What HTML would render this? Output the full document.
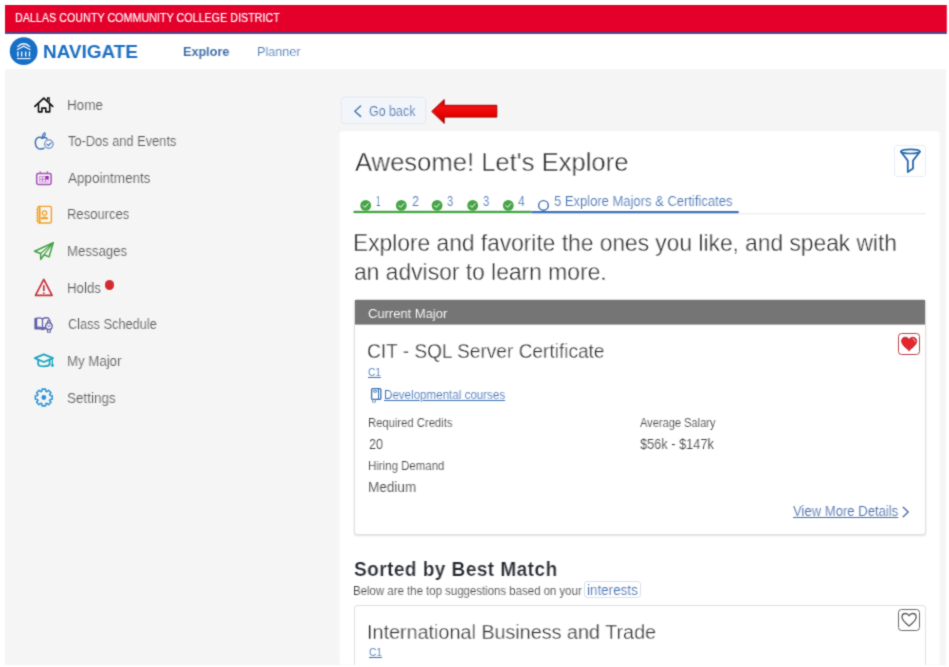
<!DOCTYPE html>
<html lang="en">
<head>
<meta charset="utf-8">
<title>Navigate - Explore Majors</title>
<style>
*{box-sizing:border-box;margin:0;padding:0}
html,body{width:949px;height:667px;overflow:hidden;background:#fff}
body{font-family:"Liberation Sans",sans-serif;position:relative;color:#555;filter:url(#softblur)}
.abs{position:absolute}
.t{position:absolute;white-space:nowrap;line-height:1;transform-origin:0 50%;will-change:transform}
svg{position:absolute;left:0;top:0;overflow:visible}
</style>
</head>
<body>
<svg width="0" height="0" style="position:absolute"><defs><filter id="softblur" x="0" y="0" width="100%" height="100%" color-interpolation-filters="sRGB"><feConvolveMatrix order="3" kernelMatrix="0.035 0.09 0.035 0.09 0.5 0.09 0.035 0.09 0.035" divisor="1" edgeMode="duplicate" preserveAlpha="true"/></filter></defs></svg>
<div id="bgwhite" class="abs" style="left:0;top:0;width:949px;height:667px;background:#fff"></div>
<div class="abs" style="left:5px;top:5px;width:941px;height:659.5px;background:#f5f5f5"></div>

<!-- main white panel -->
<svg width="949" height="667" viewBox="0 0 949 667"><path d="M339.5 664.5 V134.2 a3 3 0 0 1 3 -3 H936.6 a3 3 0 0 1 3 3 V664.5 Z" fill="#fff"/></svg>

<!-- go back button -->

<!-- steps lines -->

<!-- card 1 -->
<div class="abs" style="left:354px;top:299px;width:572px;height:236px;background:#fff;border:1px solid #e0e0e0;border-radius:3px;box-shadow:0 1px 2px rgba(0,0,0,.13)"></div>
<div class="abs" style="left:898px;top:333px;width:22px;height:22px;border:1px solid #b8434c;border-radius:3.5px;background:#fff"></div>

<!-- filter button -->
<div class="abs" style="left:894px;top:145px;width:31.5px;height:31.5px;border:1px solid #e6edf7;border-radius:3px;background:#fff"></div>

<!-- interests chip -->
<div class="abs" style="left:583.7px;top:581px;width:57px;height:17.2px;border:1px solid #d9e2ef;border-radius:3px;background:#fff"></div>

<!-- card 2 -->
<div class="abs" style="left:354px;top:605px;width:572px;height:80px;background:#fff;border:1px solid #e0e0e0;border-radius:3px"></div>
<div class="abs" style="left:898px;top:608.5px;width:22px;height:22px;border:1px solid #6a6a6a;border-radius:3.5px;background:#fff"></div>
<!-- cover overflow at bottom -->
<div class="abs" style="left:0;top:664.5px;width:949px;height:3px;background:#fff"></div>
<div class="abs" style="left:946.5px;top:0;width:3px;height:667px;background:#fff"></div>

<!-- holds dot -->
<div class="abs" style="left:105px;top:280.3px;width:9.4px;height:9.4px;border-radius:50%;background:#d42a30"></div>

<svg width="949" height="667" viewBox="0 0 949 667" fill="none" stroke-linecap="round" stroke-linejoin="round">
  <defs>
    <linearGradient id="ag" x1="0" y1="0" x2="0" y2="1">
      <stop offset="0" stop-color="#c40000"/><stop offset=".35" stop-color="#f01010"/><stop offset=".65" stop-color="#e80000"/><stop offset="1" stop-color="#b00000"/>
    </linearGradient>
  </defs>
  <!-- header bars -->
  <rect x="5" y="33" width="942" height="36.1" fill="#fff" stroke="none"/>
  <rect x="5" y="5" width="941.8" height="27.3" fill="#e4002b" stroke="none"/>
  <rect x="5" y="5" width="941.8" height="0.6" fill="#c40026" stroke="none"/>
  <rect x="5" y="32.2" width="941.8" height="1.6" fill="#26277f" stroke="none"/>
  <rect x="355" y="300" width="570" height="24.6" fill="#757575" stroke="none"/>
  <!-- step lines -->
  <rect x="354" y="213.2" width="572" height="1" fill="#e9e9e9" stroke="none"/>
  <rect x="353.5" y="210.8" width="178" height="2.2" fill="#47a447" stroke="none"/>
  <rect x="531.5" y="211" width="207.2" height="2.2" fill="#3f73b7" stroke="none"/>
  <!-- logo -->
  <circle cx="23.7" cy="51.2" r="13.9" fill="#176fc6"/>
  <g stroke="#fff" stroke-width="1.2" stroke-linecap="butt">
    <path d="M17.3 46.9 Q23.7 40.6 30.1 46.9"/>
    <path d="M16.9 49.8 L23.7 46.2 L30.5 49.8" stroke-linejoin="miter"/>
    <path d="M17.9 51.6V56.6M21.7 51.6V56.6M25.7 51.6V56.6M29.5 51.6V56.6" stroke-width="1.3"/>
    <path d="M16.9 58.6H30.6" stroke-width="1.1"/>
  </g>

  <!-- home -->
  <g stroke="#111" stroke-linejoin="round" stroke-linecap="round">
    <path d="M34.9 106.3 L43.8 98.2 L52.7 106.3" stroke-width="1.8" stroke-linejoin="miter"/>
    <path d="M38.5 104 V111.9 H41.9 V108.1 H45.8 V111.9 H49.7 V104" stroke-width="1.6"/>
    <path d="M47.5 100.4 V97.9 H49.2 V102" stroke-width="1.2" stroke-linecap="butt" stroke-linejoin="miter"/>
  </g>

  <!-- apple / to-dos -->
  <g stroke="#3d72b4" stroke-width="1.5">
    <path d="M42.3 138.3 C40.5 136.8 37.6 137 36.2 139.2 C34.6 141.8 35.2 146 37.6 148 C39.6 149.6 42.3 149 44 148.3"/>
    <path d="M42.3 138.3 C43.6 137.4 45.6 137.3 46.9 138.6"/>
    <path d="M42.4 138 C42.2 135.8 43 133.6 44.8 132.8 C45.6 134.4 44.6 136.6 42.4 138 Z" stroke-width="1.2"/>
  </g>
  <circle cx="48.9" cy="144.1" r="4.2" fill="#f8fafd" stroke="#6f90c0" stroke-width="1.3"/>
  <path d="M47 144.2 L48.4 145.6 L51 142.8" stroke="#3d72b4" stroke-width="1.2"/>

  <!-- calendar -->
  <g stroke="#a451b7" stroke-width="1.5" stroke-linecap="butt">
    <rect x="36.7" y="173.4" width="14.4" height="11" rx="1.6"/>
    <path d="M40.2 171.2V173.4M47.3 171.2V173.4" stroke-width="1.1"/>
  </g>
  <rect x="39.2" y="176" width="9.4" height="6.4" fill="#c68ad3"/>
  <rect x="45.6" y="176" width="3" height="3.2" fill="#8e2aa3"/>
  <g fill="#fbeffd"><rect x="40" y="176.9" width="1.9" height="1.7"/><rect x="43" y="176.9" width="1.9" height="1.7"/><rect x="40" y="179.9" width="1.9" height="1.7"/><rect x="43" y="179.9" width="1.9" height="1.7"/><rect x="46" y="179.9" width="1.9" height="1.7"/></g>

  <!-- resources -->
  <g stroke="#f0a226" stroke-width="1.4">
    <rect x="37.8" y="206.4" width="13.6" height="16.6" rx="1.4"/>
    <path d="M39.8 206.6V222.8" stroke-width="1.6"/>
    <path d="M36.2 209.6H38M36.2 212.4H38M36.2 215.2H38M36.2 218H38M36.2 220.6H38" stroke-width="1" stroke-linecap="butt"/>
    <circle cx="44.5" cy="213" r="2.2" stroke-width="1.2"/>
    <path d="M41.5 218.6 C41.7 216.6 47.3 216.6 47.5 218.6 Z" stroke-width="1.2"/>
  </g>

  <!-- messages -->
  <g stroke="#43a143" stroke-width="1.5">
    <path d="M53.2 242.7 L34.6 251.2 L40.6 253.5 L40.8 259.4 L44 254.8 L49.1 256.9 Z"/>
    <path d="M53.2 242.7 L40.6 253.5 M53.2 242.7 L44 254.8" stroke-width="1.1"/>
  </g>

  <!-- holds -->
  <g stroke="#c9323b">
    <path d="M43.8 279.4 L52.1 295.3 H35.5 Z" stroke-width="1.7"/>
    <path d="M43.8 285.2 V291" stroke-width="1.7" stroke-linecap="butt"/>
    <path d="M43.8 292.4 V293.8" stroke-width="1.7" stroke-linecap="butt"/>
  </g>

  <!-- class schedule -->
  <g stroke="#625fa8" stroke-width="1.3">
    <path d="M36.6 318.4 C38.6 317.6 40.8 317.8 42.5 319 C44.2 317.8 46.6 317.5 48.6 318.2 L49.6 320.4"/>
    <path d="M36.6 318.4 V327.6 C38.6 326.9 40.8 327.2 42.5 328.4 C43.6 327.6 44.6 327.3 45.6 327.2"/>
    <path d="M42.5 319 V328.2"/>
    <path d="M35.2 318.6 V328.8 H41 C41.6 329.8 43.4 329.8 44 328.8 H45.4" stroke-width="1.6"/>
    <circle cx="48.9" cy="326.2" r="3.3" fill="#f5f5f5"/>
    <path d="M47.3 323.3 L47.6 320.9 H50.2 L50.5 323.3 M47.3 329.1 L47.6 332.2 H50.2 L50.5 329.1" stroke-width="1.1"/>
    <path d="M47.7 325.6 L48.9 326.8 L50.4 325.2" stroke-width="1"/>
  </g>

  <!-- my major -->
  <g stroke="#1ba6c2" stroke-width="1.8">
    <path d="M43.8 354.3 L53 358.2 L43.8 362 L34.8 358.2 Z"/>
    <path d="M38.2 360.4 V364.6 C39.6 367 48 367 49.6 364.6 V360.4"/>
    <path d="M52.3 358.8 V364" stroke-width="1.2"/>
  </g>
  <ellipse cx="52.4" cy="365.2" rx="1.3" ry="1.7" fill="#1ba6c2"/>

  <!-- settings -->
  <path d="M41.8 391.2 L42.1 389.1 L45.5 389.1 L45.8 391.2 L46.9 391.7 L48.6 390.3 L51.0 392.7 L49.6 394.4 L50.1 395.5 L52.2 395.8 L52.2 399.2 L50.1 399.5 L49.6 400.6 L51.0 402.3 L48.6 404.7 L46.9 403.3 L45.8 403.8 L45.5 405.9 L42.1 405.9 L41.8 403.8 L40.7 403.3 L39.0 404.7 L36.6 402.3 L38.0 400.6 L37.5 399.5 L35.4 399.2 L35.4 395.8 L37.5 395.5 L38.0 394.4 L36.6 392.7 L39.0 390.3 L40.7 391.7 Z" stroke="#2f97d8" stroke-width="1.6"/>
  <circle cx="43.8" cy="397.5" r="2.4" fill="#2b8fe3"/>

  <rect x="341.2" y="97.1" width="84.6" height="26.6" rx="3.5" fill="#f2f5f9" stroke="#e3e8f0" stroke-width="1"/>
  <!-- go back chevron -->
  <path d="M360.6 106 L354.8 111.2 L360.6 116.4" stroke="#4a7ab6" stroke-width="1.5"/>

  <!-- red arrow -->
  <path d="M432 111.2 L444.2 99.6 V105.3 H496.8 V117.1 H444.2 V123 Z" fill="url(#ag)" stroke="#a80000" stroke-width="1" stroke-linejoin="miter"/>

  <!-- filter -->
  <g stroke="#2868ae" stroke-width="1.8">
    <ellipse cx="910.4" cy="151.4" rx="9.5" ry="2.1" stroke-width="1.7"/>
    <path d="M900.9 151.8 L907.8 160.6 V172 L913 168.6 V160.6 L919.9 151.8"/>
  </g>

  <!-- step circles -->
  <g fill="#46a546">
    <circle cx="365.7" cy="205.4" r="5.4"/><circle cx="401.3" cy="205.4" r="5.4"/><circle cx="437.1" cy="205.4" r="5.4"/><circle cx="472.7" cy="205.4" r="5.4"/><circle cx="508.3" cy="205.4" r="5.4"/>
  </g>
  <g stroke="#fff" stroke-width="1">
    <path d="M363.3 205.6 L365 207.3 L368.1 203.8"/>
    <path d="M398.9 205.6 L400.6 207.3 L403.7 203.8"/>
    <path d="M434.7 205.6 L436.4 207.3 L439.5 203.8"/>
    <path d="M470.3 205.6 L472 207.3 L475.1 203.8"/>
    <path d="M505.9 205.6 L507.6 207.3 L510.7 203.8"/>
  </g>
  <circle cx="543.5" cy="205.4" r="4.8" stroke="#3f6fb5" stroke-width="1.4" fill="#fff"/>

  <!-- filled heart -->
  <path d="M909.1 350.4 C905.5 347.6 901.6 344.6 901.6 341 C901.6 338.8 903.2 337.2 905.3 337.2 C906.9 337.2 908.3 338.1 909.1 339.5 C909.9 338.1 911.3 337.2 912.9 337.2 C915 337.2 916.7 338.8 916.7 341 C916.7 344.6 912.7 347.6 909.1 350.4 Z" fill="#e3272e" stroke="#b81c22" stroke-width=".8"/>
  <path d="M913 338.9 C914.2 339.1 915 340 915.1 341.2" stroke="#fff" stroke-width=".9" opacity=".85"/>

  <!-- outline heart -->
  <path d="M909.1 626 C905.6 623.3 902 620.5 902 617.1 C902 615 903.6 613.5 905.5 613.5 C907 613.5 908.3 614.3 909.1 615.7 C909.9 614.3 911.2 613.5 912.7 613.5 C914.6 613.5 916.2 615 916.2 617.1 C916.2 620.5 912.6 623.3 909.1 626 Z" stroke="#5a5a5a" stroke-width="1.3" fill="#fff"/>

  <!-- developmental icon -->
  <g stroke="#3b6fb0" stroke-width="1.3" stroke-linecap="butt">
    <rect x="371.6" y="388.6" width="9.2" height="10.8" rx="1"/>
    <path d="M378.5 388.8V399.2" stroke-width="1"/>
    <rect x="373.4" y="390.4" width="3.6" height="1.8" rx=".8" stroke-width=".9"/>
    <path d="M372.6 399.6 V402.2 H375.4 V399.6" stroke-width="1" stroke="#6f95c8"/>
  </g>

  <!-- view more chevron -->
  <path d="M903.2 507.2 L908.2 512 L903.2 516.8" stroke="#4f6fa6" stroke-width="1.4"/>
</svg>

<div id="t_dallas" class="t" style="left:15.1px;top:12.0px;font-size:12px;color:#fff;transform:scaleX(0.8956);-webkit-text-stroke:0.15px #fff;">DALLAS COUNTY COMMUNITY COLLEGE DISTRICT</div>
<div id="t_navigate" class="t" style="left:42.5px;top:42.0px;font-size:19px;color:#1b6ec2;transform:scaleX(0.9947);font-weight:bold;">NAVIGATE</div>
<div id="t_explore" class="t" style="left:183.2px;top:45.0px;font-size:13px;color:#3f6ea6;transform:scaleX(0.9702);font-weight:bold;">Explore</div>
<div id="t_planner" class="t" style="left:256.9px;top:45.0px;font-size:13px;color:#4b76b4;transform:scaleX(0.9705);-webkit-text-stroke:0.13px #fff;">Planner</div>
<div id="s1" class="t" style="left:66.8px;top:98.0px;font-size:14px;color:#5a5a5a;transform:scaleX(0.9611);-webkit-text-stroke:0.14px #f5f5f5;">Home</div>
<div id="s2" class="t" style="left:67.8px;top:134.0px;font-size:14px;color:#5a5a5a;transform:scaleX(0.9161);-webkit-text-stroke:0.14px #f5f5f5;">To-Dos and Events</div>
<div id="s3" class="t" style="left:67.8px;top:171.0px;font-size:14px;color:#5a5a5a;transform:scaleX(0.9635);-webkit-text-stroke:0.14px #f5f5f5;">Appointments</div>
<div id="s4" class="t" style="left:66.9px;top:207.0px;font-size:14px;color:#5a5a5a;transform:scaleX(0.9288);-webkit-text-stroke:0.14px #f5f5f5;">Resources</div>
<div id="s5" class="t" style="left:66.9px;top:244.0px;font-size:14px;color:#5a5a5a;transform:scaleX(0.9413);-webkit-text-stroke:0.14px #f5f5f5;">Messages</div>
<div id="s6" class="t" style="left:66.9px;top:281.0px;font-size:14px;color:#5a5a5a;transform:scaleX(0.9486);-webkit-text-stroke:0.14px #f5f5f5;">Holds</div>
<div id="s7" class="t" style="left:67.8px;top:317.0px;font-size:14px;color:#5a5a5a;transform:scaleX(0.9124);-webkit-text-stroke:0.14px #f5f5f5;">Class Schedule</div>
<div id="s8" class="t" style="left:66.9px;top:354.0px;font-size:14px;color:#5a5a5a;transform:scaleX(0.9456);-webkit-text-stroke:0.14px #f5f5f5;">My Major</div>
<div id="s9" class="t" style="left:66.8px;top:391.0px;font-size:14px;color:#5a5a5a;transform:scaleX(0.9633);-webkit-text-stroke:0.14px #f5f5f5;">Settings</div>
<div id="t_goback" class="t" style="left:368.8px;top:104.0px;font-size:14px;color:#5078b4;transform:scaleX(0.8885);-webkit-text-stroke:0.14px #f2f5f9;">Go back</div>
<div id="t_title" class="t" style="left:354.5px;top:149.0px;font-size:26px;color:#2c2c2c;transform:scaleX(0.9848);-webkit-text-stroke:0.44px #fff;">Awesome! Let&#x27;s Explore</div>
<div id="n1" class="t" style="left:376.1px;top:194.0px;font-size:14px;color:#4b76b4;transform:scaleX(0.5429);-webkit-text-stroke:0.14px #fff;">1</div>
<div id="n2" class="t" style="left:412.0px;top:194.0px;font-size:14px;color:#4b76b4;transform:scaleX(0.9000);-webkit-text-stroke:0.14px #fff;">2</div>
<div id="n3" class="t" style="left:447.2px;top:194.0px;font-size:14px;color:#4b76b4;transform:scaleX(0.7875);-webkit-text-stroke:0.14px #fff;">3</div>
<div id="n4" class="t" style="left:483.0px;top:194.0px;font-size:14px;color:#4b76b4;transform:scaleX(0.8000);-webkit-text-stroke:0.14px #fff;">3</div>
<div id="n5" class="t" style="left:518.2px;top:194.0px;font-size:14px;color:#4b76b4;transform:scaleX(0.8750);-webkit-text-stroke:0.14px #fff;">4</div>
<div id="t_step" class="t" style="left:553.8px;top:194.0px;font-size:14px;color:#4b76b4;transform:scaleX(0.9283);-webkit-text-stroke:0.14px #fff;">5 Explore Majors &amp; Certificates</div>
<div id="t_sub1" class="t" style="left:353.2px;top:231.0px;font-size:24px;color:#2c2c2c;transform:scaleX(0.9482);-webkit-text-stroke:0.41px #fff;">Explore and favorite the ones you like, and speak with</div>
<div id="t_sub2" class="t" style="left:353.6px;top:260.0px;font-size:24px;color:#2c2c2c;transform:scaleX(0.9517);-webkit-text-stroke:0.41px #fff;">an advisor to learn more.</div>
<div id="t_cm" class="t" style="left:368.0px;top:307.0px;font-size:13.5px;color:#fff;transform:scaleX(0.9602);-webkit-text-stroke:0.08px #757575;">Current Major</div>
<div id="t_cit" class="t" style="left:367.2px;top:341.0px;font-size:20px;color:#2c2c2c;transform:scaleX(0.9538);-webkit-text-stroke:0.34px #fff;">CIT - SQL Server Certificate</div>
<div id="t_c1" class="t" style="left:368.2px;top:367.0px;font-size:11px;color:#3d70b4;transform:scaleX(0.9143);text-decoration:underline;text-decoration-color:#3d70b4;text-decoration-thickness:1px;text-underline-offset:1px;-webkit-text-stroke:0.11px #fff;">C1</div>
<div id="t_dev" class="t" style="left:383.6px;top:389.0px;font-size:12px;color:#3d70b4;transform:scaleX(0.9653);text-decoration:underline;text-decoration-color:#3d70b4;text-decoration-thickness:1px;text-underline-offset:1px;-webkit-text-stroke:0.12px #fff;">Developmental courses</div>
<div id="t_rc" class="t" style="left:367.6px;top:417.0px;font-size:12px;color:#424242;transform:scaleX(0.9382);-webkit-text-stroke:0.12px #fff;">Required Credits</div>
<div id="t_20" class="t" style="left:368.5px;top:437.0px;font-size:14px;color:#424242;transform:scaleX(0.9000);-webkit-text-stroke:0.14px #fff;">20</div>
<div id="t_hd" class="t" style="left:367.5px;top:460.0px;font-size:12px;color:#424242;transform:scaleX(0.9544);-webkit-text-stroke:0.12px #fff;">Hiring Demand</div>
<div id="t_med" class="t" style="left:367.5px;top:480.0px;font-size:14px;color:#424242;transform:scaleX(0.9667);-webkit-text-stroke:0.14px #fff;">Medium</div>
<div id="t_as" class="t" style="left:640.1px;top:417.0px;font-size:12px;color:#424242;transform:scaleX(0.9220);-webkit-text-stroke:0.12px #fff;">Average Salary</div>
<div id="t_sal" class="t" style="left:640.1px;top:437.0px;font-size:14px;color:#424242;transform:scaleX(0.9123);-webkit-text-stroke:0.14px #fff;">$56k - $147k</div>
<div id="t_vmd" class="t" style="left:793.3px;top:504.0px;font-size:14px;color:#4a6ea8;transform:scaleX(0.9348);text-decoration:underline;text-decoration-color:#4a6ea8;text-decoration-thickness:1px;text-underline-offset:1px;-webkit-text-stroke:0.14px #fff;">View More Details</div>
<div id="t_sorted" class="t" style="left:354.4px;top:560.0px;font-size:19.5px;color:#23272e;transform:scaleX(0.9726);font-weight:bold;letter-spacing:0.5px;-webkit-text-stroke:0.2px #fff;">Sorted by Best Match</div>
<div id="t_below" class="t" style="left:353.4px;top:585.0px;font-size:12px;color:#424242;transform:scaleX(0.9523);-webkit-text-stroke:0.12px #fff;">Below are the top suggestions based on your</div>
<div id="t_int" class="t" style="left:586.8px;top:583.0px;font-size:14px;color:#4672b2;transform:scaleX(0.9596);-webkit-text-stroke:0.14px #fff;">interests</div>
<div id="t_ibt" class="t" style="left:366.5px;top:622.0px;font-size:20px;color:#2c2c2c;transform:scaleX(0.9883);-webkit-text-stroke:0.34px #fff;">International Business and Trade</div>
<div id="t_c1b" class="t" style="left:368.5px;top:647.0px;font-size:11px;color:#3d70b4;transform:scaleX(0.9214);text-decoration:underline;text-decoration-color:#3d70b4;text-decoration-thickness:1px;text-underline-offset:1px;-webkit-text-stroke:0.11px #fff;">C1</div>
</body>
</html>
